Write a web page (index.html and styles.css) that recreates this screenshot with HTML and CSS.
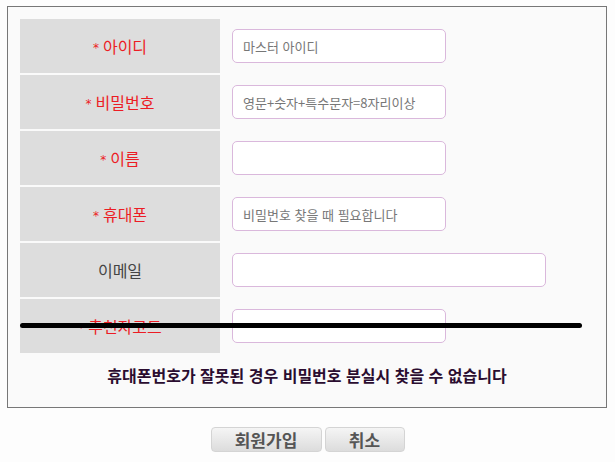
FILE: index.html
```html
<!DOCTYPE html>
<html lang="ko">
<head>
    <meta charset="UTF-8">
    <meta name="viewport" content="width=device-width, initial-scale=1.0">
    <title>회원가입</title>
    <link rel="stylesheet" href="styles.css">
</head>
<body>
    <div class="join-box">
        <div class="form-table">
            <div class="form-row">
                <div class="label required"><span class="star">*</span> 아이디</div>
                <div class="field"><input type="text" placeholder="마스터 아이디"></div>
            </div>
            <div class="form-row">
                <div class="label required"><span class="star">*</span> 비밀번호</div>
                <div class="field"><input type="password" placeholder="영문+숫자+특수문자=8자리이상"></div>
            </div>
            <div class="form-row">
                <div class="label required"><span class="star">*</span> 이름</div>
                <div class="field"><input type="text"></div>
            </div>
            <div class="form-row">
                <div class="label required"><span class="star">*</span> 휴대폰</div>
                <div class="field"><input type="text" placeholder="비밀번호 찾을 때 필요합니다"></div>
            </div>
            <div class="form-row">
                <div class="label">이메일</div>
                <div class="field"><input type="text" class="wide"></div>
            </div>
            <div class="form-row">
                <div class="label required"><span class="star">*</span> 추천자코드</div>
                <div class="field"><input type="text"></div>
            </div>
        </div>
        <div class="strike"></div>
        <p class="notice">휴대폰번호가 잘못된 경우 비밀번호 분실시 찾을 수 없습니다</p>
    </div>

    <div class="buttons">
        <button class="btn btn-join">회원가입</button>
        <button class="btn btn-cancel">취소</button>
    </div>
</body>
</html>
```

FILE: styles.css
```css
body {
    margin: 6px 7px;
    background-color: #fdfdfd;
    font-family: "Noto Sans CJK KR", "Noto Sans", sans-serif;
}
.join-box {
    position: relative;
    width: 574px;
    padding: 12px 12px 0 12px;
    height: 388px;
    border: 1px solid #777;
    background-color: #fafafa;
}
.form-table {
    display: flex;
    flex-direction: column;
    gap: 2px;
}
.form-row {
    display: flex;
    height: 54px;
    gap: 12px;
}
.label {
    width: 200px;
    background-color: #dddddd;
    display: flex;
    align-items: center;
    justify-content: center;
    font-size: 16px;
    color: #444;
}
.label.required {
    color: #ec1c24;
}
.star {
    font-family: "DejaVu Sans", sans-serif;
    font-size: 12px;
    margin-right: 4px;
    position: relative;
    top: 2px;
}
.field {
    display: flex;
    align-items: center;
}
.field input {
    box-sizing: border-box;
    width: 214px;
    height: 34px;
    padding: 0 10px;
    border: 1px solid #dab8dc;
    border-radius: 5px;
    background-color: #fff;
    font-family: inherit;
    font-size: 13px;
    color: #333;
}
.field input::placeholder {
    color: #777;
}
.field input.wide {
    width: 314px;
}
.strike {
    position: absolute;
    left: 12px;
    top: 316px;
    width: 562px;
    height: 5px;
    border-radius: 3px;
    background-color: #000;
}
.notice {
    margin: 10px 0 0 0;
    text-align: center;
    font-size: 16px;
    font-weight: bold;
    color: #2b0d30;
}
.buttons {
    display: flex;
    justify-content: center;
    gap: 3px;
    margin-top: 19px;
}
.btn {
    height: 25px;
    border: 1px solid #d4d4d4;
    border-radius: 4px;
    background: linear-gradient(#f5f5f5, #dcdcdc);
    font-family: inherit;
    font-size: 17px;
    font-weight: bold;
    color: #555;
    padding: 0;
    line-height: 1;
}
.btn-join {
    width: 111px;
}
.btn-cancel {
    width: 80px;
}
```
